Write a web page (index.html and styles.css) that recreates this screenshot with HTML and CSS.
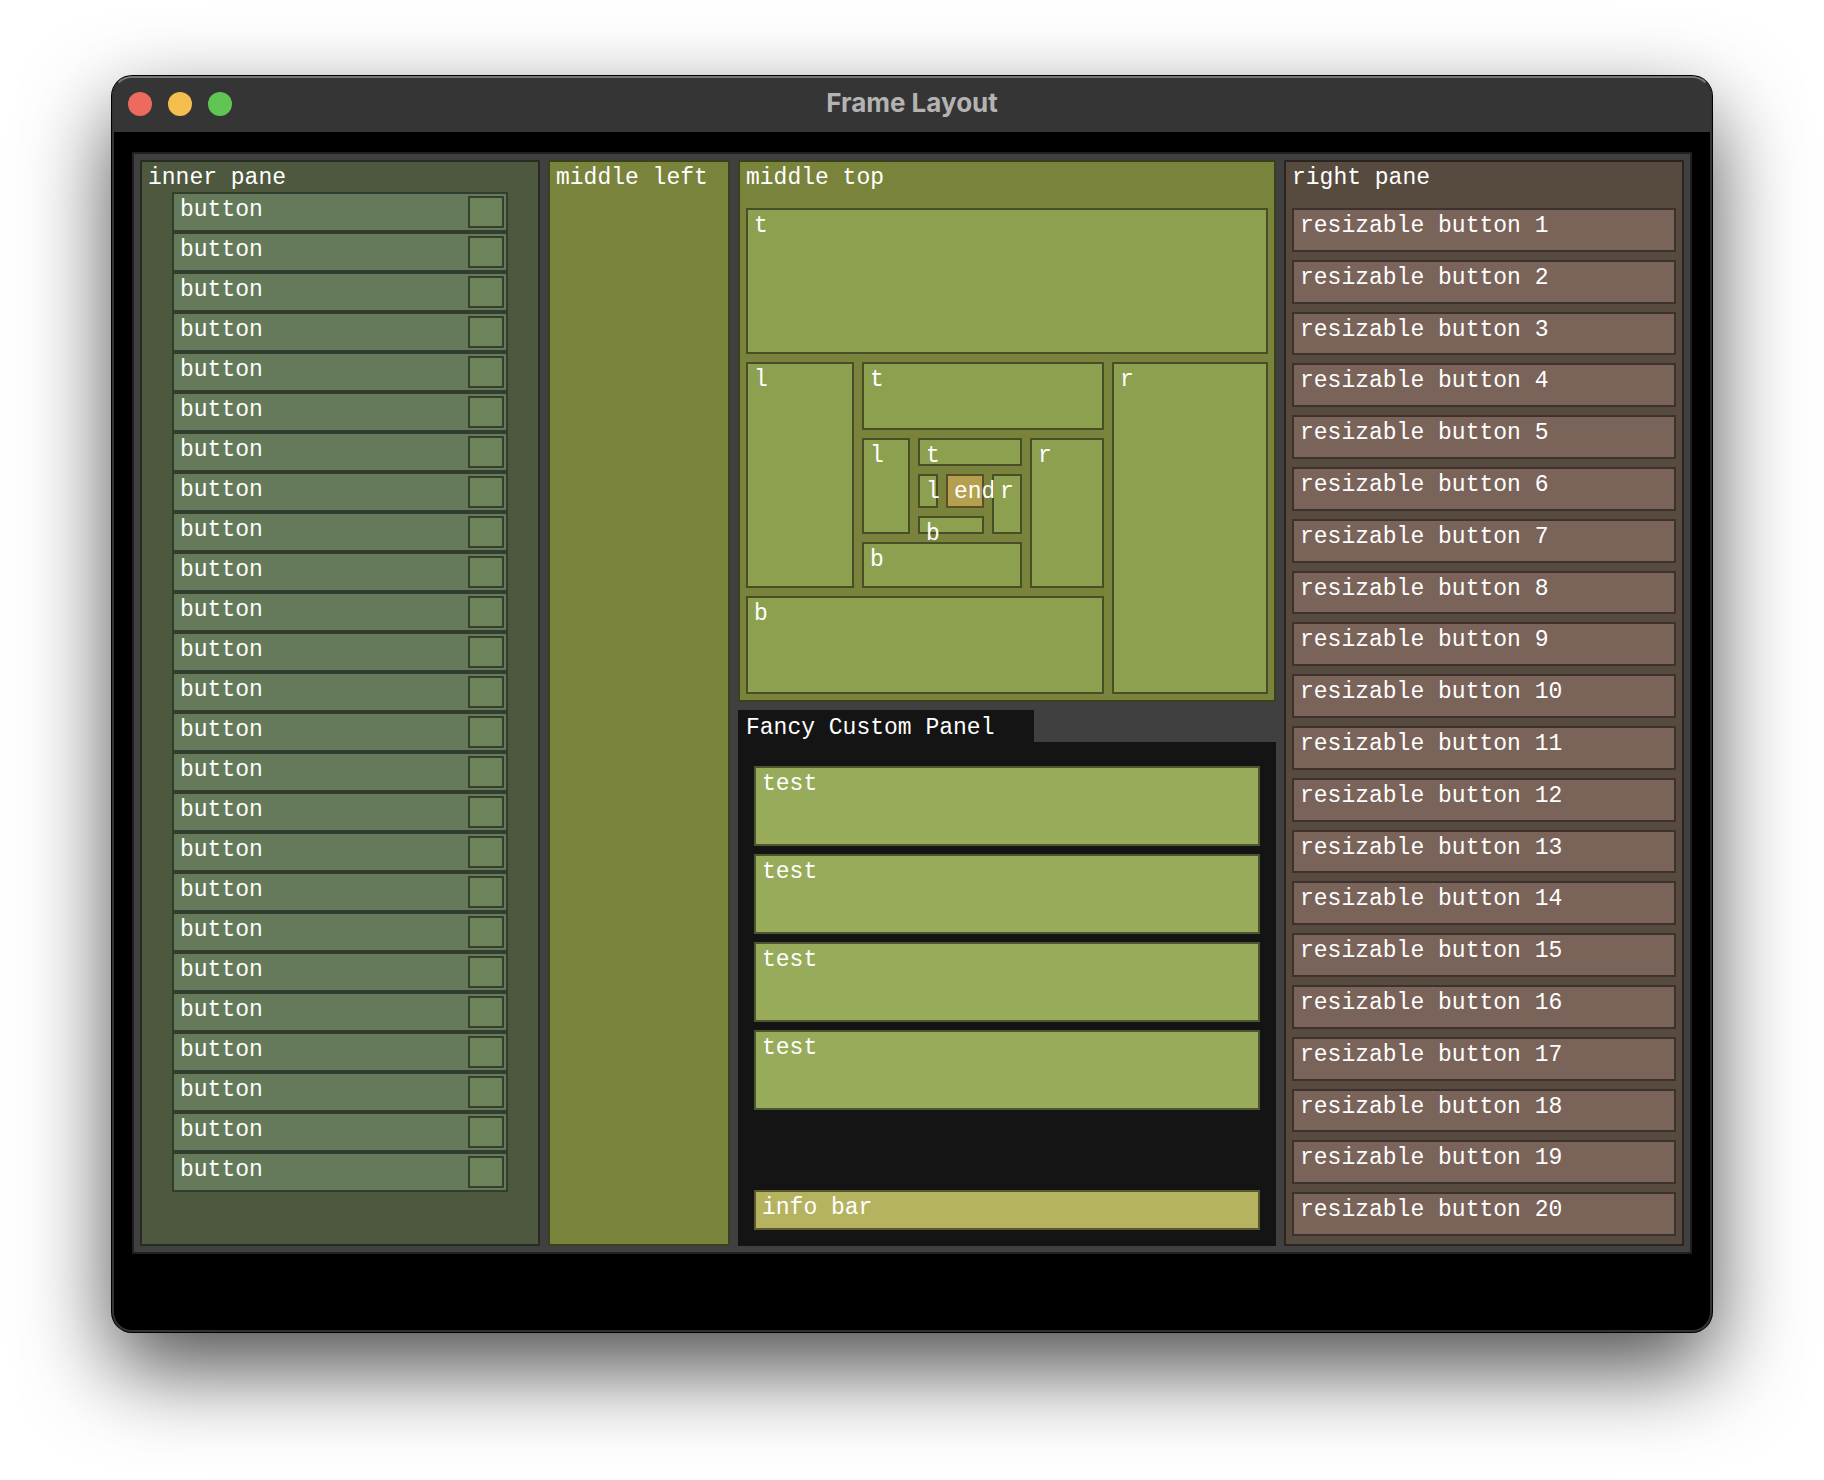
FILE: index.html
```
<!DOCTYPE html>
<html lang="en">
<head>
<meta charset="utf-8">
<title>Frame Layout</title>
<link rel="stylesheet" href="styles.css">
</head>
<body>
<main class="window">
  <header class="titlebar">
    <div class="lights">
      <button class="light close" aria-label="Close"></button>
      <button class="light minimize" aria-label="Minimize"></button>
      <button class="light zoom" aria-label="Zoom"></button>
    </div>
    <h1 class="title">Frame Layout</h1>
  </header>
  <div class="frame">
    <section class="pane inner-pane">
      <h2 class="label">inner pane</h2>
      <div class="rows">
        <div class="row"><button class="row-button">button</button><input class="tick" type="checkbox" aria-label="button 1"></div>
        <div class="row"><button class="row-button">button</button><input class="tick" type="checkbox" aria-label="button 2"></div>
        <div class="row"><button class="row-button">button</button><input class="tick" type="checkbox" aria-label="button 3"></div>
        <div class="row"><button class="row-button">button</button><input class="tick" type="checkbox" aria-label="button 4"></div>
        <div class="row"><button class="row-button">button</button><input class="tick" type="checkbox" aria-label="button 5"></div>
        <div class="row"><button class="row-button">button</button><input class="tick" type="checkbox" aria-label="button 6"></div>
        <div class="row"><button class="row-button">button</button><input class="tick" type="checkbox" aria-label="button 7"></div>
        <div class="row"><button class="row-button">button</button><input class="tick" type="checkbox" aria-label="button 8"></div>
        <div class="row"><button class="row-button">button</button><input class="tick" type="checkbox" aria-label="button 9"></div>
        <div class="row"><button class="row-button">button</button><input class="tick" type="checkbox" aria-label="button 10"></div>
        <div class="row"><button class="row-button">button</button><input class="tick" type="checkbox" aria-label="button 11"></div>
        <div class="row"><button class="row-button">button</button><input class="tick" type="checkbox" aria-label="button 12"></div>
        <div class="row"><button class="row-button">button</button><input class="tick" type="checkbox" aria-label="button 13"></div>
        <div class="row"><button class="row-button">button</button><input class="tick" type="checkbox" aria-label="button 14"></div>
        <div class="row"><button class="row-button">button</button><input class="tick" type="checkbox" aria-label="button 15"></div>
        <div class="row"><button class="row-button">button</button><input class="tick" type="checkbox" aria-label="button 16"></div>
        <div class="row"><button class="row-button">button</button><input class="tick" type="checkbox" aria-label="button 17"></div>
        <div class="row"><button class="row-button">button</button><input class="tick" type="checkbox" aria-label="button 18"></div>
        <div class="row"><button class="row-button">button</button><input class="tick" type="checkbox" aria-label="button 19"></div>
        <div class="row"><button class="row-button">button</button><input class="tick" type="checkbox" aria-label="button 20"></div>
        <div class="row"><button class="row-button">button</button><input class="tick" type="checkbox" aria-label="button 21"></div>
        <div class="row"><button class="row-button">button</button><input class="tick" type="checkbox" aria-label="button 22"></div>
        <div class="row"><button class="row-button">button</button><input class="tick" type="checkbox" aria-label="button 23"></div>
        <div class="row"><button class="row-button">button</button><input class="tick" type="checkbox" aria-label="button 24"></div>
        <div class="row"><button class="row-button">button</button><input class="tick" type="checkbox" aria-label="button 25"></div>
      </div>
    </section>
    <section class="pane middle-left">
      <h2 class="label">middle left</h2>
    </section>
    <div class="middle">
      <section class="pane middle-top">
        <h2 class="label">middle top</h2>
        <div class="spiral">
          <div class="cell t1">t</div>
          <div class="cell r1">r</div>
          <div class="cell b1">b</div>
          <div class="cell l1">l</div>
          <div class="cell t2">t</div>
          <div class="cell r2">r</div>
          <div class="cell b2">b</div>
          <div class="cell l2">l</div>
          <div class="cell t3">t</div>
          <div class="cell r3">r</div>
          <div class="cell b3">b</div>
          <div class="cell l3">l</div>
          <div class="cell end">end</div>
        </div>
      </section>
      <section class="fancy">
        <h2 class="tab">Fancy Custom Panel</h2>
        <div class="fancy-body">
          <button class="test">test</button>
          <button class="test">test</button>
          <button class="test">test</button>
          <button class="test">test</button>
          <div class="info">info bar</div>
        </div>
      </section>
    </div>
    <section class="pane right-pane">
      <h2 class="label">right pane</h2>
      <div class="stack">
        <button class="resizable">resizable button 1</button>
        <button class="resizable">resizable button 2</button>
        <button class="resizable">resizable button 3</button>
        <button class="resizable">resizable button 4</button>
        <button class="resizable">resizable button 5</button>
        <button class="resizable">resizable button 6</button>
        <button class="resizable">resizable button 7</button>
        <button class="resizable">resizable button 8</button>
        <button class="resizable">resizable button 9</button>
        <button class="resizable">resizable button 10</button>
        <button class="resizable">resizable button 11</button>
        <button class="resizable">resizable button 12</button>
        <button class="resizable">resizable button 13</button>
        <button class="resizable">resizable button 14</button>
        <button class="resizable">resizable button 15</button>
        <button class="resizable">resizable button 16</button>
        <button class="resizable">resizable button 17</button>
        <button class="resizable">resizable button 18</button>
        <button class="resizable">resizable button 19</button>
        <button class="resizable">resizable button 20</button>
      </div>
    </section>
  </div>
</main>
</body>
</html>
```
FILE: styles.css
```
* { box-sizing: border-box; }

body {
  margin: 0;
  min-height: 100vh;
  padding: 76px 112px 148px;
  display: flex;
  background: #fff;
  color: #fff;
  font: 23px/28px "Liberation Mono", monospace;
}

button {
  appearance: none;
  margin: 0;
  border: 0;
  background: none;
  color: inherit;
  font: inherit;
  text-align: left;
}

h1, h2 { margin: 0; font: inherit; }

.window {
  flex: 1;
  min-width: 0;
  display: flex;
  flex-direction: column;
  position: relative;
  border-radius: 20px;
  background: #000;
  box-shadow: 0 0 0 1px #000, 0 36px 88px rgba(0, 0, 0, 0.7);
}

/* light rim drawn over the title bar and body */
.window::after {
  content: "";
  position: absolute;
  inset: 0;
  border: 2px solid #333;
  border-top-color: #777;
  border-radius: 20px;
  pointer-events: none;
}

.titlebar {
  display: grid;
  grid-template-columns: 1fr auto 1fr;
  align-items: center;
  height: 56px;
  padding: 0 16px;
  border-radius: 20px 20px 0 0;
  background: #353535;
}

.lights { display: flex; gap: 16px; }

.light {
  width: 24px;
  height: 24px;
  padding: 0;
  border-radius: 50%;
}

.close { background: #ec6a5e; }
.minimize { background: #f4bf4f; }
.zoom { background: #61c554; }

.title {
  color: #b4b3b3;
  font: bold 26px/28px Inter, sans-serif;
  padding-bottom: 2px;
}

.frame {
  flex: 1;
  display: grid;
  grid-template-columns: 400px 182px minmax(0, 1fr) 400px;
  gap: 8px;
  margin: 20px 20px 78px;
  padding: 6px;
  border: 2px solid #202020;
  background: #404040;
}

.pane {
  display: flex;
  flex-direction: column;
  border: 2px solid;
  padding: 2px 6px 6px;
  white-space: nowrap;
}

.inner-pane { background: #4d583f; border-color: #262c20; }
.middle-left { background: #79833b; border-color: #3c411d; }
.middle-top { background: #79833b; border-color: #3c411d; }
.right-pane { background: #574b3f; border-color: #2b251f; }

.rows { padding: 0 24px; }

.row {
  display: flex;
  height: 40px;
  padding: 2px;
  border: 2px solid #323d2d;
  background: #647a5a;
}

.row-button { flex: 1; padding: 0 4px 4px; }

.tick {
  appearance: none;
  width: 36px;
  height: 32px;
  margin: 0;
  border: 2px solid #363f2b;
  background: #6d8359;
}

.middle {
  display: grid;
  grid-template-rows: minmax(0, 542fr) minmax(0, 536fr);
  gap: 8px;
}

/* takes whatever room the pane has; its cells never stretch the pane */
.spiral {
  flex: 1;
  contain: size;
  display: grid;
  gap: 8px;
  margin-top: 16px;
  grid-template-columns:
    minmax(0, 108fr) minmax(0, 48fr) minmax(0, 20fr) minmax(0, 38fr)
    minmax(0, 30fr) minmax(0, 74fr) minmax(0, 156fr);
  grid-template-rows:
    minmax(0, 146fr) minmax(0, 68fr) minmax(0, 28fr) minmax(0, 34fr)
    minmax(0, 18fr) minmax(0, 46fr) minmax(0, 98fr);
  grid-template-areas:
    "t1 t1 t1 t1  t1 t1 t1"
    "l1 t2 t2 t2  t2 t2 r1"
    "l1 l2 t3 t3  t3 r2 r1"
    "l1 l2 l3 end r3 r2 r1"
    "l1 l2 b3 b3  r3 r2 r1"
    "l1 b2 b2 b2  b2 r2 r1"
    "b1 b1 b1 b1  b1 b1 r1";
}

.cell {
  padding: 2px 0 0 6px;
  border: 2px solid #464f27;
  background: #8da04f;
}

.t1 { grid-area: t1; }
.r1 { grid-area: r1; }
.b1 { grid-area: b1; }
.l1 { grid-area: l1; }
.t2 { grid-area: t2; }
.r2 { grid-area: r2; }
.b2 { grid-area: b2; }
.l2 { grid-area: l2; }
.t3 { grid-area: t3; }
.r3 { grid-area: r3; }
.b3 { grid-area: b3; }
.l3 { grid-area: l3; }
.end { grid-area: end; z-index: 1; background: #b5a04f; border-color: #5a4f27; }

.fancy {
  display: flex;
  flex-direction: column;
  align-items: flex-start;
}

.tab {
  width: 55%;
  padding: 4px 8px 0;
  background: #141414;
}

.fancy-body {
  flex: 1;
  align-self: stretch;
  display: flex;
  flex-direction: column;
  gap: 8px;
  padding: 24px 16px 16px;
  background: #141414;
}

.test {
  display: flex;
  height: 80px;
  padding: 2px 6px;
  border: 2px solid #4c552d;
  background: #98ab5a;
}

.info {
  height: 40px;
  margin-top: auto;
  padding: 2px 6px;
  border: 2px solid #5a592d;
  background: #b5b360;
}

.stack {
  flex: 1;
  display: grid;
  grid-auto-rows: 1fr;
  gap: 8px;
  margin-top: 16px;
  padding-bottom: 2px;
}

.resizable {
  display: flex;
  padding: 2px 6px;
  border: 2px solid #3d322d;
  background: #7a645a;
}
```
